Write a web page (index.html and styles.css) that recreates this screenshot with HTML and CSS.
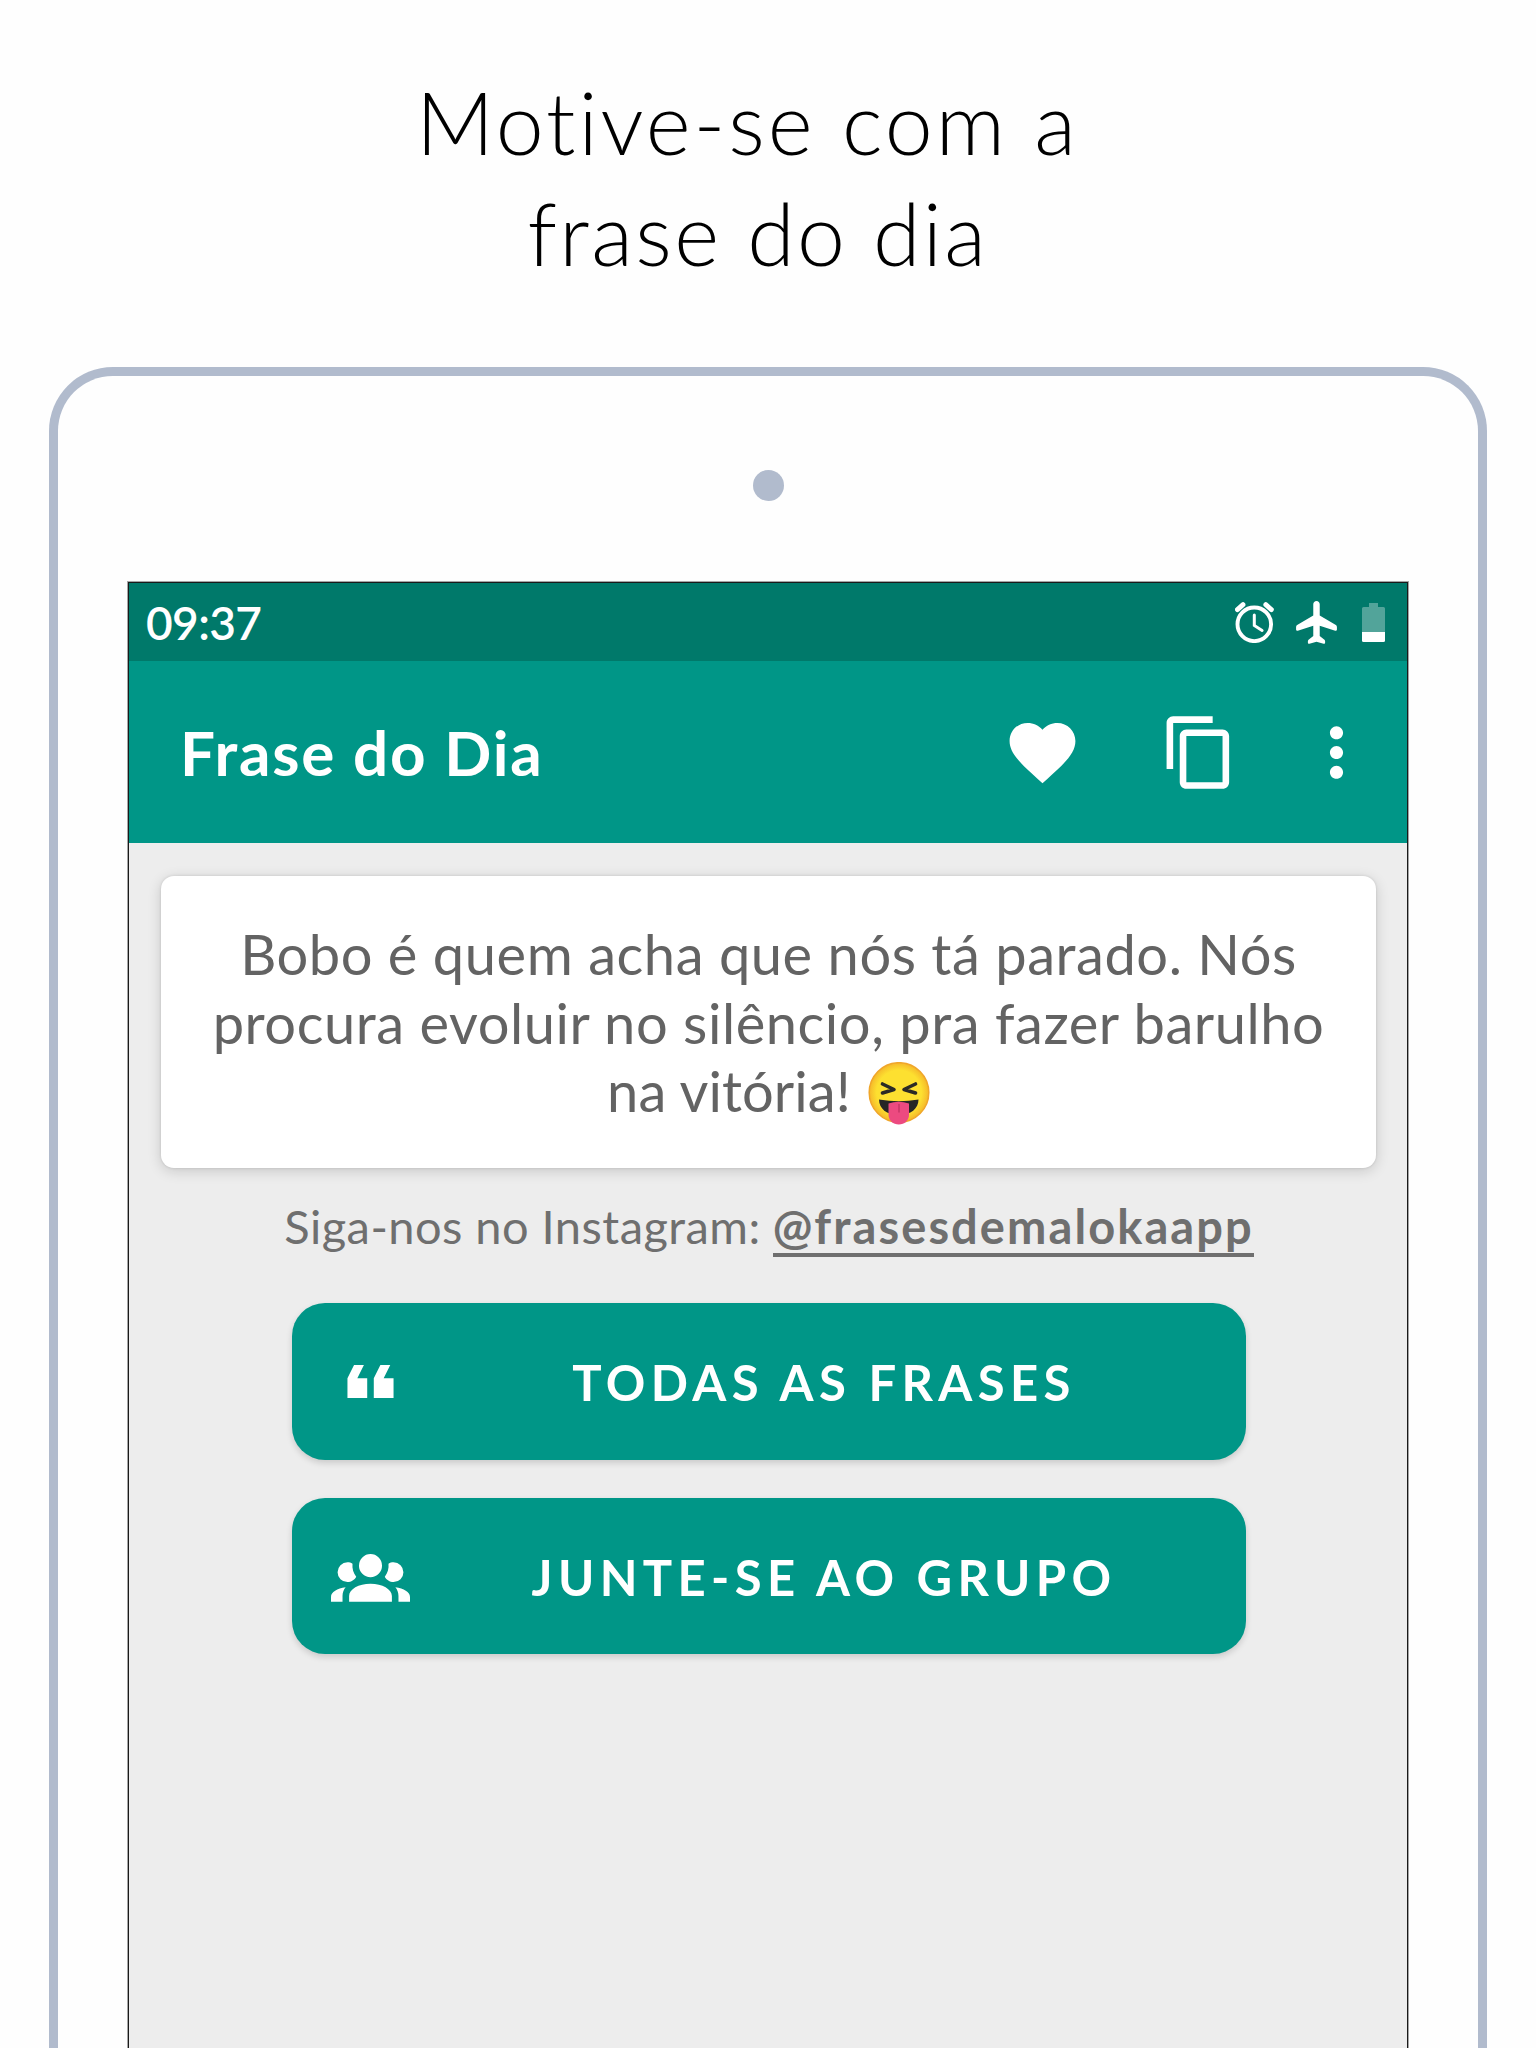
FILE: index.html
```html
<!DOCTYPE html>
<html lang="pt-BR">
<head>
    <meta charset="UTF-8">
    <meta name="viewport" content="width=device-width, initial-scale=1.0">
    <title>Frase do Dia</title>
    <link rel="stylesheet" href="styles.css">
</head>
<body>
    <h1 class="headline"><span class="line1">Motive-se com a</span><span>frase do dia</span></h1>
    <div class="tablet">
        <div class="camera"></div>
        <div class="screen">
            <div class="statusbar">
                <span class="clock">09:37</span>
                <svg class="alarm" viewBox="0 0 39 41" fill="none" stroke="#fff" stroke-linecap="round">
                    <circle cx="19.3" cy="22.3" r="16.8" stroke-width="3.9"/>
                    <path d="M19.3 13v10.5l7.8 5" stroke-width="3"/>
                    <path d="M2.400 7.600L8 2.600M36.400 7.600L30.800 2.600" stroke-width="4.800"/>
                </svg>
                <svg class="plane" viewBox="2.5 2 19 20" fill="#fff">
                    <path d="M21.500 15.200v-1.100c0-.4-.2-.7-.5-.9L13.500 8.700V3.500C13.500 2.670 12.830 2 12 2s-1.500.670-1.500 1.500v5.200L3 13.200c-.3.2-.5.5-.5.9v1.100c0 .4.4.7.8.6l7.200-2.300v4.800l-2.200 1.700c-.2.200-.3.400-.3.600v.8c0 .3.300.6.700.5L12 21l3.300.9c.4.1.700-.200.700-.5v-.8c0-.2-.1-.4-.3-.6l-2.200-1.700v-4.800l7.200 2.300c.4.1.8-.2.8-.6z"/>
                </svg>
                <svg class="battery" viewBox="0 0 23 39" fill="#fff">
                    <path d="M7 0h9v4h5.500q1.500 0 1.500 1.500V29H0V5.500Q0 4 1.500 4H7z" opacity=".32"/>
                    <path d="M0 29h23v8.500q0 1.500-1.500 1.500h-20Q0 39 0 37.500z"/>
                </svg>
            </div>
            <div class="appbar">
                <span class="title">Frase do Dia</span>
                <svg class="icon" viewBox="0 0 24 24"><path d="M12 21.350l-1.450-1.320C5.400 15.360 2 12.280 2 8.500 2 5.420 4.420 3 7.500 3c1.740 0 3.410.81 4.500 2.090C13.090 3.810 14.760 3 16.500 3 19.580 3 22 5.420 22 8.500c0 3.780-3.400 6.860-8.550 11.540L12 21.350z"/></svg>
                <svg class="icon copy" viewBox="0 0 24 24"><path d="M16 1H4c-1.100 0-2 .9-2 2v14h2V3h12V1zm3 4H8c-1.100 0-2 .9-2 2v14c0 1.100.9 2 2 2h11c1.100 0 2-.9 2-2V7c0-1.100-.9-2-2-2zm0 16H8V7h11v14z"/></svg>
                <svg class="icon" viewBox="0 0 24 24"><path d="M12 8c1.100 0 2-.9 2-2s-.9-2-2-2-2 .9-2 2 .9 2 2 2zm0 2c-1.100 0-2 .9-2 2s.9 2 2 2 2-.9 2-2-.9-2-2-2zm0 6c-1.100 0-2 .9-2 2s.9 2 2 2 2-.9 2-2-.9-2-2-2z"/></svg>
            </div>
            <div class="card">
                <p>Bobo é quem acha que nós tá parado. Nós</p>
                <p>procura evoluir no silêncio, pra fazer barulho</p>
                <p class="last">na vitória!
                    <svg class="emoji" viewBox="0 0 62 63">
                        <defs>
                            <radialGradient id="face">
                                <stop offset=".75" stop-color="#fde030"/>
                                <stop offset="1" stop-color="#f5b82a"/>
                            </radialGradient>
                        </defs>
                        <circle cx="31" cy="30.5" r="29.8" fill="url(#face)" stroke="#f0a62a" stroke-width="1.5"/>
                        <path d="M14.500 22l11.500 5.500-11.500 3.500M47.500 22L36 27.500 47.500 31" fill="none" stroke="#2b2a26" stroke-width="3.600" stroke-linecap="round" stroke-linejoin="round"/>
                        <path d="M11 37.500q20 3.500 39.500 0c0 9-7.500 15.500-19.700 15.500S11 46.500 11 37.500z" fill="#262626"/>
                        <path d="M20.500 41.500q10-3.500 20.500 0v11c0 6-4.500 10-10.200 10s-10.300-4-10.300-10z" fill="#ec4a80"/>
                        <path d="M31 42v8.500" stroke="#c93867" stroke-width="1.600"/>
                    </svg>
                </p>
            </div>
            <div class="follow">Siga-nos no Instagram:<a class="handle">@frasesdemalokaapp</a></div>
            <div class="btn">
                <svg class="icon" viewBox="0 0 24 24"><path d="M18 7h-3l-2 4v6h6v-6h-3zM10 7H7l-2 4v6h6v-6H8z"/></svg>
                <span class="label">TODAS AS FRASES</span>
            </div>
            <div class="btn">
                <svg class="icon" viewBox="0 0 24 24"><path d="M12,5.500A3.500,3.500 0 0,1 15.500,9A3.500,3.500 0 0,1 12,12.500A3.500,3.500 0 0,1 8.500,9A3.500,3.500 0 0,1 12,5.500M5,8C5.560,8 6.080,8.150 6.530,8.420C6.380,9.850 6.800,11.270 7.660,12.380C7.160,13.340 6.160,14 5,14A3,3 0 0,1 2,11A3,3 0 0,1 5,8M19,8A3,3 0 0,1 22,11A3,3 0 0,1 19,14C17.840,14 16.840,13.340 16.340,12.380C17.200,11.270 17.620,9.850 17.470,8.420C17.920,8.150 18.440,8 19,8M5.500,18.250C5.500,16.180 8.410,14.500 12,14.500C15.590,14.500 18.500,16.180 18.500,18.250V20H5.500V18.250M0,20V18.500C0,17.110 1.890,15.940 4.450,15.600C3.860,16.280 3.500,17.220 3.500,18.250V20H0M24,20H20.500V18.250C20.500,17.220 20.140,16.280 19.550,15.600C22.110,15.940 24,17.110 24,18.500V20Z"/></svg>
                <span class="label">JUNTE-SE AO GRUPO</span>
            </div>
        </div>
    </div>
</body>
</html>
```
FILE: styles.css
```css
* {
    box-sizing: border-box;
}
body {
    margin: 0;
    height: 2048px;
    overflow: hidden;
    background: #fefefe;
    font-family: "Lato", sans-serif;
    display: flex;
    flex-direction: column;
    align-items: center;
}
h1, p {
    margin: 0;
}
.headline {
    height: 367px;
    flex: none;
    padding: 66px 20px 0 0;
    display: flex;
    flex-direction: column;
    align-items: center;
    font-size: 86px;
    font-weight: 300;
    line-height: 111px;
    letter-spacing: 2.4px;
    color: #000;
}
.line1 {
    margin-right: 21px;
    letter-spacing: 3px;
}
.tablet {
    width: 1438px;
    height: 1681px;
    flex: none;
    border: 9px solid #b1bbcd;
    border-bottom: 0;
    border-radius: 64px 64px 0 0;
    background: #fefefe;
    display: flex;
    flex-direction: column;
    align-items: center;
}
.camera {
    width: 31px;
    height: 31px;
    margin: 94px 0 81px;
    border-radius: 50%;
    background: #b1bbcd;
}
.screen {
    width: 1280px;
    flex: 1;
    border: 1px solid #1a1a1a;
    border-bottom: 0;
    box-shadow: 0 0 0 1px #a5a5a5;
    background: #ededed;
    display: flex;
    flex-direction: column;
    align-items: center;
}
.statusbar {
    width: 100%;
    height: 78px;
    padding: 0 22px 0 17px;
    background: #00796a;
    color: #fff;
    display: flex;
    align-items: center;
}
.clock {
    flex: 1;
    font-size: 46px;
    font-weight: 600;
    letter-spacing: -.6px;
}
.alarm {
    width: 39px;
    height: 41px;
}
.plane {
    width: 41px;
    height: 43px;
    margin: 0 25px 0 22px;
}
.battery {
    width: 23px;
    height: 39px;
}
.appbar {
    width: 100%;
    height: 182px;
    padding: 0 31px 0 51px;
    background: #009687;
    color: #fff;
    display: flex;
    align-items: center;
}
.title {
    flex: 1;
    padding-bottom: 1px;
    font-size: 62px;
    font-weight: 700;
    letter-spacing: 1.8px;
}
.icon {
    width: 79px;
    height: 79px;
    flex: none;
    fill: #fff;
}
.copy {
    margin: 0 58px 0 78px;
}
.card {
    width: 1215px;
    height: 292px;
    margin: 33px 0 0 1px;
    padding-top: 44px;
    border-radius: 13px;
    background: #fff;
    box-shadow: 0 3px 14px rgba(0, 0, 0, .16), 0 0 3px rgba(0, 0, 0, .12);
    color: #636363;
    font-size: 56px;
    line-height: 68.7px;
    letter-spacing: .55px;
}
.card p {
    display: flex;
    justify-content: center;
    white-space: nowrap;
}
.card .last {
    letter-spacing: .1px;
}
.emoji {
    width: 62px;
    height: 63px;
    margin: 5px 0 0 17px;
}
.follow {
    margin: 28px 0 0 2px;
    height: 69px;
    display: flex;
    color: #6f6f6f;
    font-size: 47px;
    line-height: 60px;
    letter-spacing: .45px;
}
.handle {
    margin-left: 12px;
    height: 61px;
    border-bottom: 4px solid #6f6f6f;
    font-weight: 700;
    letter-spacing: 2.07px;
}
.btn {
    width: 954px;
    height: 156.5px;
    margin: 38px 0 0 1px;
    padding: 0 7px 0 39px;
    border-radius: 33px;
    background: #009687;
    box-shadow: 0 3px 6px rgba(0, 0, 0, .15);
    color: #fff;
    display: flex;
    align-items: center;
}
.label {
    flex: 1;
    padding-top: 2px;
    text-align: center;
    font-size: 49px;
    font-weight: 700;
    letter-spacing: 5.35px;
}
```
